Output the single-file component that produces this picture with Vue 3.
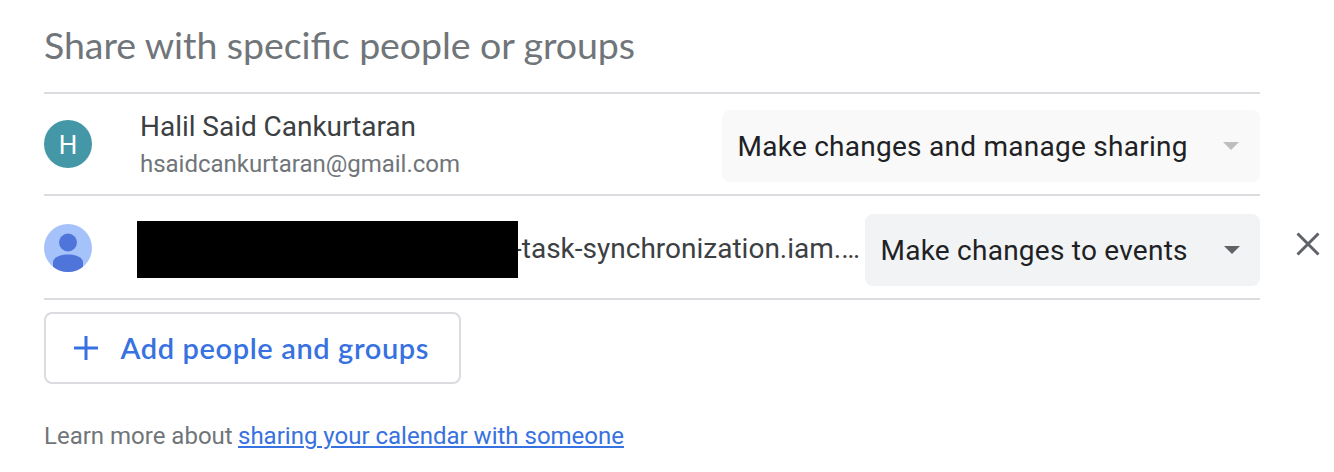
<script setup>
const arrow = 'M0 0H16L8 8Z'
</script>

<template>
  <main class="panel">
    <h2><svg width="592" height="46"><text x="0" y="34" textLength="591">Share with specific people or groups</text></svg></h2>
    <section class="list">
      <div class="row first">
        <span class="avatar letter">H</span>
        <div class="identity">
          <svg width="330" height="70"><text class="name" x="0" y="28" textLength="276">Halil Said Cankurtaran</text><text class="email" x="0" y="64" textLength="320">hsaidcankurtaran@gmail.com</text></svg>
        </div>
        <button class="select disabled">
          <svg class="label" width="452" height="40"><text x="-0.5" y="30" textLength="450">Make changes and manage sharing</text></svg>
          <svg class="arrow" width="16" height="8"><path :d="arrow" /></svg>
        </button>
      </div>
      <div class="row second">
        <svg class="avatar" viewBox="0 0 48 48"><circle cx="24" cy="24" r="24" fill="#a6c2fa" /><circle cx="24" cy="18.5" r="9" fill="#4f74da" /><path d="M9 42.7V38.5C9 33 17 30.5 24 30.5s15 2.5 15 8v4.2A24 24 0 0 1 9 42.7Z" fill="#4f74da" /></svg>
        <span class="redacted"></span>
        <svg class="address" width="344" height="40"><text x="-4" y="29" textLength="346">-task-synchronization.iam.…</text></svg>
        <button class="select">
          <svg class="label" width="308" height="40"><text x="-0.5" y="30" textLength="307">Make changes to events</text></svg>
          <svg class="arrow" width="16" height="8"><path :d="arrow" /></svg>
        </button>
        <button class="remove" aria-label="Remove"><svg width="24" height="24"><path d="M1.5 1.5l21 21M22.5 1.5l-21 21" /></svg></button>
      </div>
    </section>
    <button class="add">
      <svg class="plus" width="26" height="26"><path d="M13 1v24M1 13h24" /></svg>
      <svg class="label" width="310" height="42"><text x="-0.5" y="31.5" textLength="308">Add people and groups</text></svg>
    </button>
    <p class="help"><span>Learn more about</span> <a href="#">sharing your calendar with someone</a></p>
  </main>
</template>

<style scoped>
* { box-sizing: border-box; }
.panel { width: 1334px; height: 472px; padding: 25px 0 0 44px; background: #fff; font-family: Roboto, sans-serif; overflow: hidden; }
svg { display: block; overflow: visible; flex: none; }
button { border: 0; padding: 0; font-family: inherit; }
h2 { height: 67px; margin: 0; font: 400 37.5px Lato, sans-serif; }
h2 text { fill: #70757a; }
.list { width: 1216px; border-top: 2px solid #dadce0; }
.row { display: flex; align-items: center; border-bottom: 2px solid #dadce0; }
.first { height: 102px; }
.first .select { margin-top: 4px; }
.second { height: 104px; padding-top: 2px; }
.avatar { width: 48px; height: 48px; flex: none; }
.letter { display: flex; align-items: center; justify-content: center; border-radius: 50%; background: #4397a7; color: #fff; font-size: 26px; font-weight: 400; padding-top: 2px; }
.identity { margin-left: 48px; width: 330px; margin-top: -2px; }
.name { font-size: 28px; fill: #3c4043; }
.email { font-size: 24px; fill: #70757a; }
.select { display: flex; align-items: center; justify-content: space-between; flex: none; height: 72px; margin-left: auto; padding: 0 20px 0 16px; border-radius: 8px; background: #f1f3f4; width: 395px; font-size: 28px; color: #202124; }
.second .select { margin-top: 4px; }
.select text { fill: #202124; }
.select .arrow { fill: #5f6368; }
.disabled { width: 538px; padding-right: 21px; background: #f9f9f9; }
.disabled .arrow { fill: #bdbec0; }
.redacted { width: 381px; height: 57px; margin-top: 2px; margin-left: 45px; background: #000; flex: none; position: relative; z-index: 1; }
.address { margin-top: 2px; font-size: 28px; fill: #3c4043; }
.remove { width: 24px; height: 24px; margin: -8px -60px 0 36px; background: transparent; flex: none; }
.remove path { stroke: #5f6368; stroke-width: 3; fill: none; }
.add { width: 417px; height: 72px; margin-top: 12px; display: flex; align-items: center; padding-left: 27px; background: white; border: 2px solid #dadce0; border-radius: 8px; }
.add .label { margin-left: 22px; font: 600 29px Lato, sans-serif; fill: #3871e0; }
.plus { stroke: #3871e0; stroke-width: 3; fill: none; }
.help { display: flex; margin: 36px 0 0; font-size: 24px; line-height: 32px; color: #70757a; }
.help span { width: 194px; }
.help a { color: #3871e0; text-decoration-thickness: 2px; text-underline-offset: 2px; }
</style>
